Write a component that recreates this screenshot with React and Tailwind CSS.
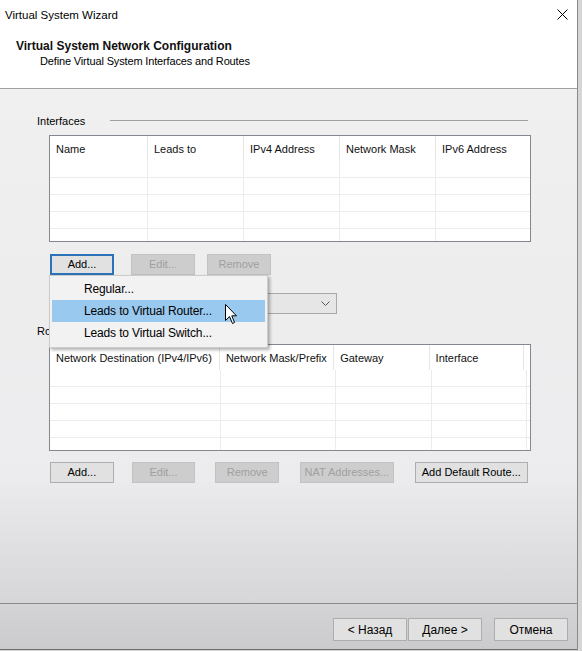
import React from "react";

const ifaceCols = [
  { label: "Name", w: "w-[98px]" },
  { label: "Leads to", w: "w-[96px]" },
  { label: "IPv4 Address", w: "w-[96px]" },
  { label: "Network Mask", w: "w-[96px]" },
  { label: "IPv6 Address", w: "flex-1" },
];

const routeCols = [
  { label: "Network Destination (IPv4/IPv6)", w: "w-[171px]" },
  { label: "Network Mask/Prefix", w: "w-[115px]" },
  { label: "Gateway", w: "w-[96px]" },
  { label: "Interface", w: "w-[95px]" },
  { label: "", w: "flex-1" },
];

function ListView({ cols }) {
  return (
    <div className="ml-[12px] w-[482px] h-[107px] border border-[#828790] bg-white overflow-hidden">
      <div className="flex h-[25px]">
        {cols.map((c, i) => (
          <div
            key={i}
            className={`${c.w} h-full pl-[6px] pt-px flex items-center whitespace-nowrap overflow-hidden text-[#111] ${
              i < cols.length - 1 ? "border-r border-[#e5e5e5]" : ""
            }`}
          >
            {c.label}
          </div>
        ))}
      </div>
      {[0, 1, 2, 3, 4].map((r) => (
        <div key={r} className="flex h-[17px] border-b border-[#ececec]">
          {cols.map((c, i) => (
            <div
              key={i}
              className={`${c.w} h-full ${i < cols.length - 1 ? "border-r border-[#ececec]" : ""}`}
            />
          ))}
        </div>
      ))}
    </div>
  );
}

function Btn({ children, w, disabled, focused, className = "" }) {
  let cls = "bg-[#e1e1e1] border border-[#adadad] text-black";
  if (disabled) cls = "bg-[#cdcdcd] border border-[#c2c2c2] text-[#a0a0a0]";
  if (focused) cls = "bg-[#e1e1e1] border-2 border-[#2b72b8] text-black";
  return (
    <div className={`${w} h-full flex items-center justify-center whitespace-nowrap ${cls} ${className}`}>
      {children}
    </div>
  );
}

export default function App() {
  return (
    <div className="w-[582px] h-[651px] flex bg-[#d6d6d6] text-[11px] text-black font-['Liberation_Sans',Arial,sans-serif] overflow-hidden">
      <div className="relative w-[578px] h-[650px] flex flex-col border-r border-[#8a8a8a]">
        {/* header */}
        <div className="h-[89px] shrink-0 bg-white border-b border-[#a0a0a0] relative">
          <div className="pl-[5px] pt-[7px] text-[11.5px] leading-[16px]">Virtual System Wizard</div>
          <svg className="absolute left-[557px] top-[9px]" width="11" height="11" viewBox="0 0 11 11">
            <path d="M0.5 0.5 L10.5 10.5 M10.5 0.5 L0.5 10.5" stroke="#000" strokeWidth="1" fill="none" />
          </svg>
          <div className="pl-[16px] mt-[15px] text-[12px] leading-[16px] font-bold text-[#111]">
            Virtual System Network Configuration
          </div>
          <div className="pl-[40px] text-[11px] leading-[15px] tracking-[-0.15px]">
            Define Virtual System Interfaces and Routes
          </div>
        </div>

        {/* body */}
        <div className="flex-1 flex flex-col pl-[37px] pr-[49px] bg-linear-to-b from-[#f0f0f0] via-[#ecebed] via-75% to-[#d6d5d7]">
          <div className="mt-[25px] h-[15px] flex items-center">
            <span className="leading-[15px]">Interfaces</span>
            <div className="flex-1 ml-[25px] h-px bg-[#a0a0a0] -mt-[2px]" />
          </div>
          <div className="mt-[6px]">
            <ListView cols={ifaceCols} />
          </div>
          <div className="mt-[12px] ml-[13px] h-[21px] flex">
            <Btn w="w-[64px]" focused>Add...</Btn>
            <Btn w="w-[64px]" disabled className="ml-[17px]">Edit...</Btn>
            <Btn w="w-[64px]" disabled className="ml-[12px]">Remove</Btn>
          </div>
          <div className="mt-[18px] h-[21px] flex">
            <div className="ml-[200px] w-[100px] h-full bg-[#e6e6e6] border border-[#a9a9a9] flex items-center justify-end pr-[6px]">
              <svg width="9" height="6" viewBox="0 0 9 6">
                <path d="M0.5 0.5 L4.5 4.5 L8.5 0.5" stroke="#555" strokeWidth="1" fill="none" />
              </svg>
            </div>
          </div>
          <div className="mt-[10px] h-[15px] flex items-center">
            <span className="leading-[15px]">Routes</span>
          </div>
          <div className="mt-[5px]">
            <ListView cols={routeCols} />
          </div>
          <div className="mt-[11px] ml-[13px] h-[21px] flex">
            <Btn w="w-[64px]">Add...</Btn>
            <Btn w="w-[64px]" disabled className="ml-[18px]">Edit...</Btn>
            <Btn w="w-[64px]" disabled className="ml-[20px]">Remove</Btn>
            <Btn w="w-[94px]" disabled className="ml-[21px]">NAT Addresses...</Btn>
            <Btn w="w-[114px]" className="ml-[21px]">Add Default Route...</Btn>
          </div>
        </div>

        {/* footer */}
        <div className="h-[47px] shrink-0 border-t border-b border-t-[#8a8a8a] border-b-[#6e6e6e] bg-linear-to-b from-[#d4d3d5] to-[#cbcacc] flex justify-end pt-[14px] pr-[9px] text-[12px]">
          <div className="h-[23px] flex">
            <Btn w="w-[74px]" className="bg-[#d9d9d9]">&lt; Назад</Btn>
            <Btn w="w-[74px]" className="ml-px">Далее &gt;</Btn>
            <Btn w="w-[74px]" className="ml-[12px]">Отмена</Btn>
          </div>
        </div>

        {/* popup menu */}
        <div className="absolute left-[49px] top-[275px] w-[219px] h-[73px] bg-[#f2f2f2] border border-[#cccccc] shadow-[2px_2px_3px_rgba(0,0,0,0.3)] p-[2px] text-[12px] tracking-[-0.15px]">
          <div className="h-[22px] flex items-center pl-[32px]">Regular...</div>
          <div className="h-[22px] flex items-center pl-[32px] bg-[#99c9ef]">Leads to Virtual Router...</div>
          <div className="h-[22px] flex items-center pl-[32px]">Leads to Virtual Switch...</div>
        </div>

        {/* mouse cursor */}
        <svg className="absolute left-[225px] top-[304px]" width="13" height="21" viewBox="0 0 13 21">
          <path
            d="M0.5 0.5 L0.5 16.5 L4.5 12.5 L7.5 19.5 L9.5 18.5 L6.8 11.8 L11.5 11.8 Z"
            fill="#fff"
            stroke="#000"
            strokeWidth="1"
            strokeLinejoin="round"
          />
        </svg>
      </div>
      <div className="flex-1" />
    </div>
  );
}
